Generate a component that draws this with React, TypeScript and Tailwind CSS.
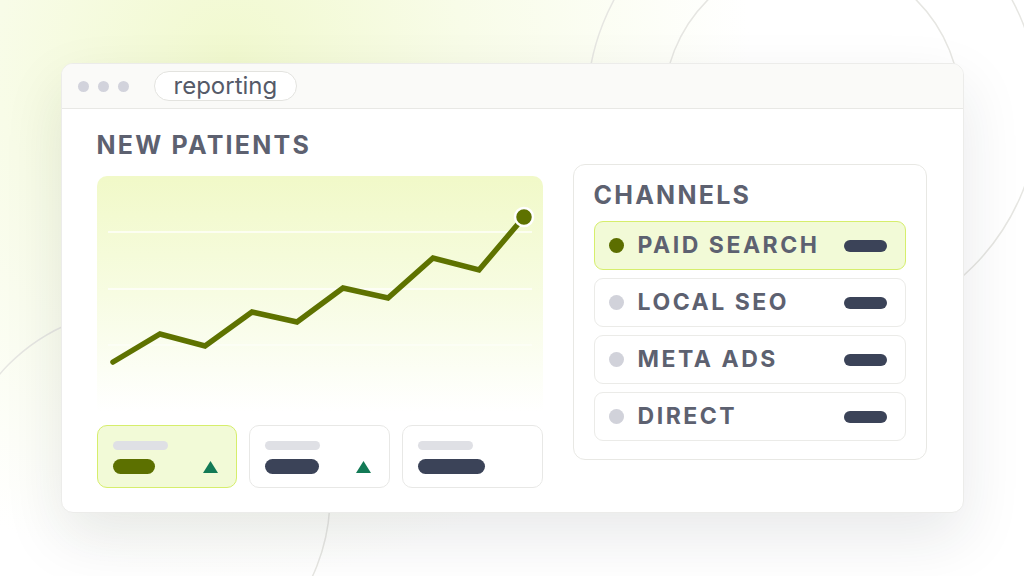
const font = { fontFamily: "Inter, 'Noto Sans', sans-serif" };

const points: [number, number][] = [
  [16, 186],
  [63, 158],
  [108, 170],
  [155, 136],
  [200, 146],
  [246, 112],
  [291, 122],
  [336, 82],
  [382, 94],
  [427, 41],
];

function Backdrop() {
  return (
    <svg className="absolute inset-0 h-full w-full" viewBox="0 0 1024 576" preserveAspectRatio="none">
      <defs>
        <radialGradient id="glow" cx="230" cy="60" r="520" gradientUnits="userSpaceOnUse">
          <stop offset="0" stopColor="#f1f9cf" />
          <stop offset="0.45" stopColor="#f8fce8" />
          <stop offset="1" stopColor="#ffffff" />
        </radialGradient>
      </defs>
      <rect width="1024" height="576" fill="url(#glow)" />
      <g fill="none" stroke="#e6e6e2" strokeWidth="1.5">
        <circle cx="812" cy="105" r="148" />
        <circle cx="813" cy="107" r="226" />
        <circle cx="142" cy="497" r="188" />
      </g>
    </svg>
  );
}

function Chart() {
  const d = points.map((p, i) => `${i === 0 ? "M" : "L"}${p[0]} ${p[1]}`).join(" ");
  const last = points[points.length - 1];
  return (
    <div className="h-[236px] rounded-t-[10px] bg-gradient-to-b from-[#f1f9c8] via-[#f7fce2] to-[#ffffff]">
      <svg width="446" height="236" viewBox="0 0 446 236">
        <g stroke="#ffffff" strokeWidth="1.5" opacity="0.9">
          <line x1="11" y1="56" x2="435" y2="56" />
          <line x1="11" y1="113" x2="435" y2="113" />
          <line x1="11" y1="169" x2="435" y2="169" opacity="0.6" />
        </g>
        <path d={d} fill="none" stroke="#5e7200" strokeWidth="5.5" strokeLinejoin="miter" strokeLinecap="round" />
        <circle cx={last[0]} cy={last[1]} r="9" fill="#5e7200" stroke="#ffffff" strokeWidth="2.5" />
      </svg>
    </div>
  );
}

function StatCard({ active, bar, up }: { active?: boolean; bar: number; up?: boolean }) {
  return (
    <div
      className={
        active
          ? "h-[63px] rounded-[10px] border border-[#d6ee6c] bg-[#f2fad7] pl-[15px] pr-[18px] pt-[15px]"
          : "h-[63px] rounded-[10px] border border-[#e8e8e6] bg-white pl-[15px] pr-[18px] pt-[15px]"
      }
    >
      <div className="h-[9px] w-[55px] rounded-full bg-[#dfe0e5]" />
      <div className="mt-[9px] flex items-center justify-between">
        <div
          className={active ? "h-[15px] rounded-full bg-[#5c7000]" : "h-[15px] rounded-full bg-[#3b4358]"}
          style={{ width: bar }}
        />
        {up && (
          <svg width="15" height="12" viewBox="0 0 15 12">
            <polygon points="7.5,0 15,12 0,12" fill="#137a56" />
          </svg>
        )}
      </div>
    </div>
  );
}

function ChannelRow({ label, active }: { label: string; active?: boolean }) {
  return (
    <div
      className={
        active
          ? "flex h-[49px] items-center rounded-[9px] border border-[#d6ee6c] bg-[#f2fad7] pl-[14px] pr-[18px]"
          : "flex h-[49px] items-center rounded-[9px] border border-[#ebebe8] bg-white pl-[14px] pr-[18px]"
      }
    >
      <div className={active ? "h-[15px] w-[15px] rounded-full bg-[#5c6e00]" : "h-[15px] w-[15px] rounded-full bg-[#d1d2da]"} />
      <span className="ml-[14px] text-[23px] font-bold leading-none tracking-[0.11em] text-[#5d6170]">{label}</span>
      <div className="ml-auto h-[12px] w-[43px] rounded-full bg-[#3b4358]" />
    </div>
  );
}

export default function App() {
  return (
    <div className="relative flex h-[576px] w-[1024px] items-center justify-center overflow-hidden bg-white" style={font}>
      <Backdrop />
      <div className="relative h-[450px] w-[903px] overflow-hidden rounded-[12px] border border-[#ececea] bg-white shadow-[0_24px_60px_rgba(30,35,50,0.10)]">
        <div className="flex h-[45px] items-center border-b border-[#e8e8e5] bg-[#fafaf8] pl-[16px]">
          <div className="flex gap-[9px]">
            <div className="h-[11px] w-[11px] rounded-full bg-[#d2d3dc]" />
            <div className="h-[11px] w-[11px] rounded-full bg-[#d2d3dc]" />
            <div className="h-[11px] w-[11px] rounded-full bg-[#d2d3dc]" />
          </div>
          <div className="ml-[25px] flex h-[30px] items-center rounded-full border border-[#e3e3df] bg-white px-[19px] text-[24px] leading-none text-[#555a68]">
            reporting
          </div>
        </div>
        <div className="flex gap-[30px] px-[35px] pt-[21px]">
          <div className="w-[446px]">
            <h1 className="text-[25px] font-bold leading-[30px] tracking-[0.09em] text-[#5d6170]">NEW PATIENTS</h1>
            <div className="mt-[16px]">
              <Chart />
            </div>
            <div className="mt-[13px] grid grid-cols-3 gap-3">
              <StatCard active bar={42} up />
              <StatCard bar={54} up />
              <StatCard bar={67} />
            </div>
          </div>
          <div className="mt-[34px] w-[354px]">
            <div className="rounded-[12px] border border-[#e8e8e4] bg-white px-[20px] pb-[18px] pt-[15px]">
              <h2 className="text-[25px] font-bold leading-[30px] tracking-[0.09em] text-[#5d6170]">CHANNELS</h2>
              <div className="mt-[11px] flex flex-col gap-2">
                <ChannelRow label="PAID SEARCH" active />
                <ChannelRow label="LOCAL SEO" />
                <ChannelRow label="META ADS" />
                <ChannelRow label="DIRECT" />
              </div>
            </div>
          </div>
        </div>
      </div>
    </div>
  );
}
